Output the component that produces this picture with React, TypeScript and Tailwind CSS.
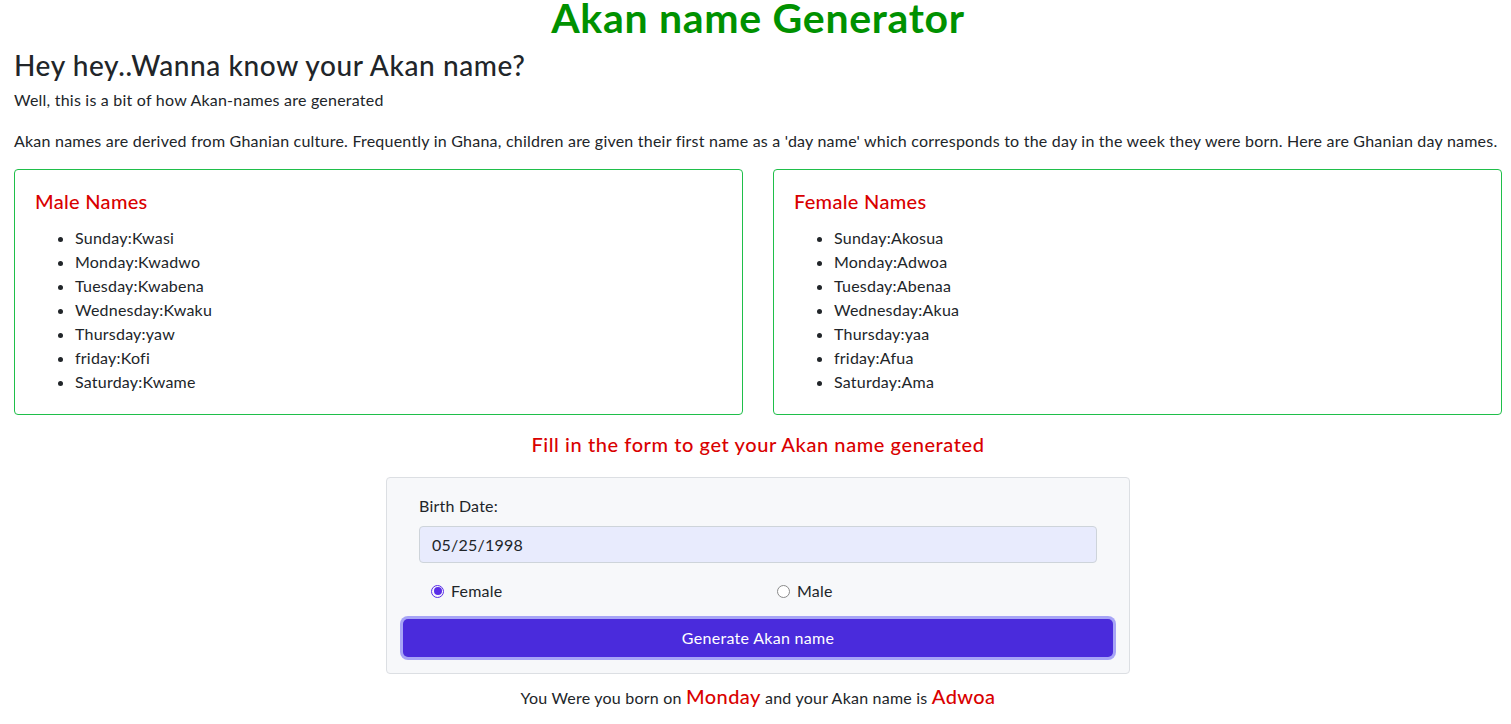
import React from 'react';

const male = [
  'Sunday:Kwasi',
  'Monday:Kwadwo',
  'Tuesday:Kwabena',
  'Wednesday:Kwaku',
  'Thursday:yaw',
  'friday:Kofi',
  'Saturday:Kwame',
];

const female = [
  'Sunday:Akosua',
  'Monday:Adwoa',
  'Tuesday:Abenaa',
  'Wednesday:Akua',
  'Thursday:yaa',
  'friday:Afua',
  'Saturday:Ama',
];

function NameCard({ title, names }: { title: string; names: string[] }) {
  return (
    <div className="rounded-[4px] border border-[#1fbf4a] px-5 pt-[19px] pb-[20px]">
      <h3 className="text-[20px] leading-[24px] font-medium tracking-[0.3px] text-[#d90000]">{title}</h3>
      <ul className="mt-[13px] list-disc pl-10">
        {names.map((n) => (
          <li key={n} className="leading-[24px]">
            {n}
          </li>
        ))}
      </ul>
    </div>
  );
}

export default function App() {
  return (
    <div className="min-h-screen bg-white pr-[9px] pl-[14px] text-[16px] tracking-[0.22px] text-[#212529] [font-family:Lato,'Noto_Sans',sans-serif]">
      <h1 className="pt-[1px] text-center text-[41px] leading-[34px] font-bold tracking-[0.7px] text-[#009100]">
        Akan name Generator
      </h1>
      <h2 className="mt-[13px] text-[28px] leading-[34px] font-medium tracking-[0.6px]">
        Hey hey..Wanna know your Akan name?
      </h2>
      <p className="mt-[6px] leading-[24px]">Well, this is a bit of how Akan-names are generated</p>
      <p className="mt-[17px] leading-[24px]">
        Akan names are derived from Ghanian culture. Frequently in Ghana, children are given their first name as a
        'day name' which corresponds to the day in the week they were born. Here are Ghanian day names.
      </p>

      <div className="mt-[16px] grid grid-cols-2 gap-[30px]">
        <NameCard title="Male Names" names={male} />
        <NameCard title="Female Names" names={female} />
      </div>

      <h4 className="mt-[17px] text-center text-[20px] leading-[24px] font-medium tracking-[0.58px] text-[#d90000]">
        Fill in the form to get your Akan name generated
      </h4>

      <form className="mx-auto mt-[21px] w-[744px] rounded-[4px] border border-[#dcdfe3] bg-[#f7f8fa] px-4 pt-[16px] pb-[16px]">
        <div className="px-4">
          <label className="block leading-[24px]">Birth Date:</label>
          <div className="mt-[8px] flex h-[37px] items-center rounded-[4px] border border-[#ced4da] bg-[#e8ebfd] px-3">
            05/25/1998
          </div>
          <div className="mt-[16px] flex h-[24px] items-center">
            <label className="ml-[12px] flex w-[346px] items-center gap-[7px]">
              <span className="flex h-[13px] w-[13px] items-center justify-center rounded-full border border-[#5b2ee8]">
                <span className="h-[8px] w-[8px] rounded-full bg-[#5b2ee8]" />
              </span>
              Female
            </label>
            <label className="flex items-center gap-[7px]">
              <span className="h-[13px] w-[13px] rounded-full border border-[#8a8a8a] bg-white" />
              Male
            </label>
          </div>
        </div>
        <button
          type="button"
          className="mt-[16px] flex h-[38px] w-full items-center justify-center rounded-[5px] bg-[#4a2bdc] tracking-[0.3px] text-white ring-[3px] ring-[#a7a4f6]"
        >
          Generate Akan name
        </button>
      </form>

      <p className="mt-[10px] text-center leading-[24px]">
        You Were you born on{' '}
        <span className="text-[20px] font-medium tracking-[0.4px] text-[#d90000]">Monday</span> and your Akan name is{' '}
        <span className="text-[20px] font-medium tracking-[0.4px] text-[#d90000]">Adwoa</span>
      </p>
    </div>
  );
}
